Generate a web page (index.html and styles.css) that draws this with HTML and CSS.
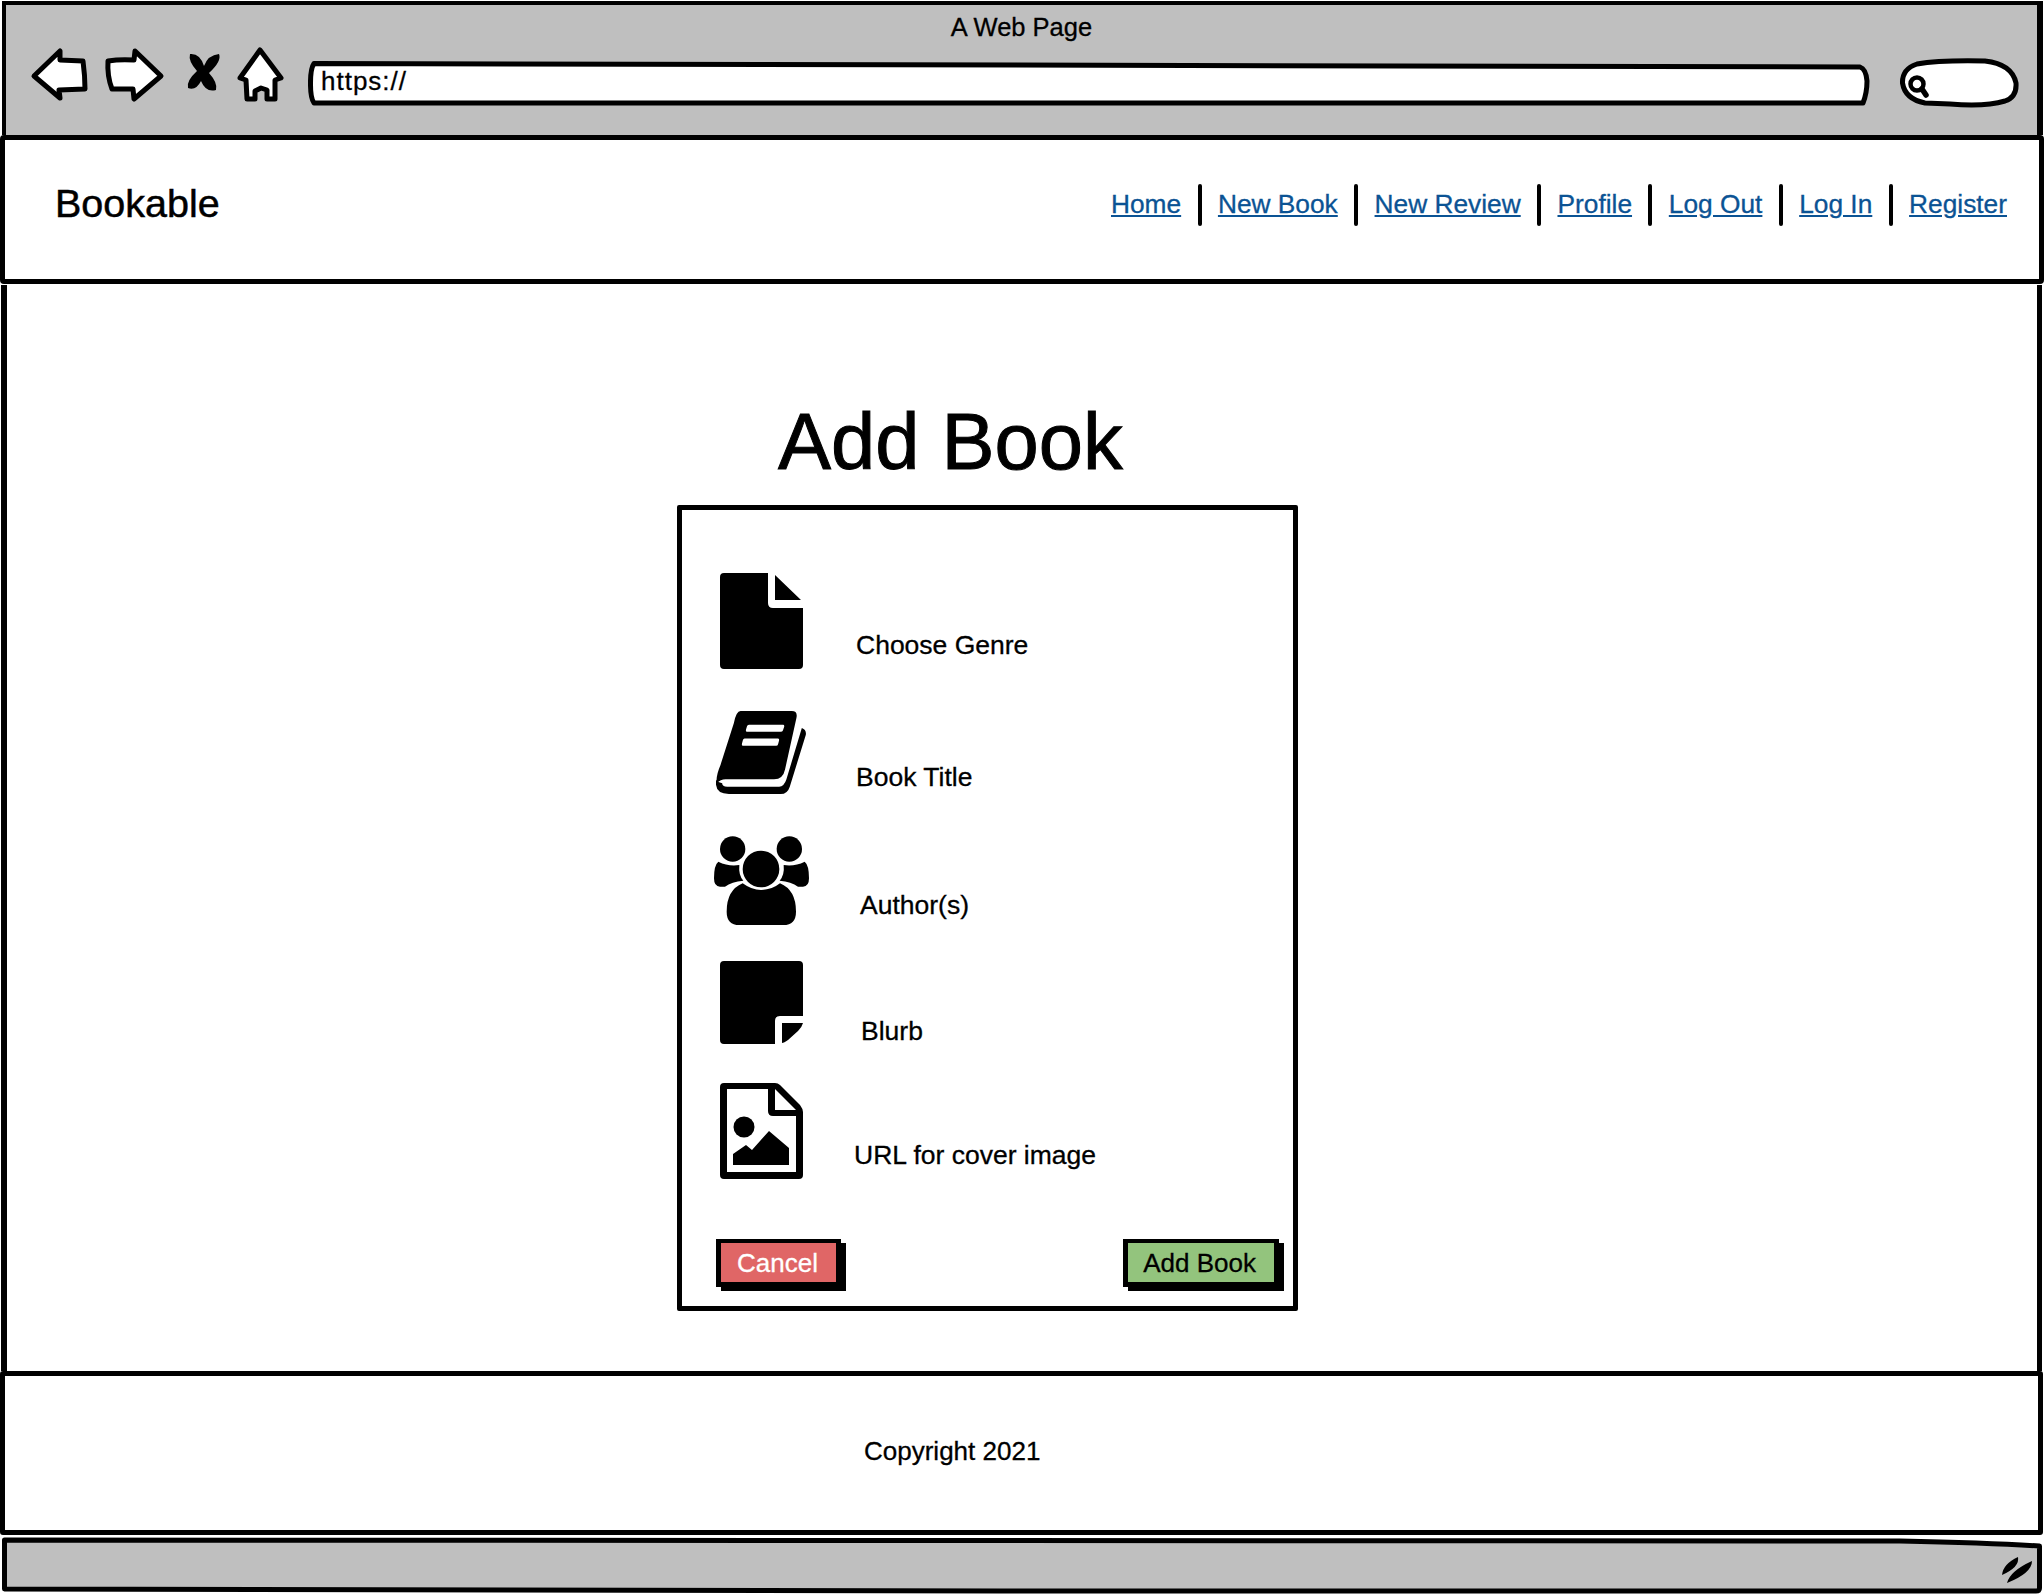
FILE: index.html
```html
<!DOCTYPE html>
<html lang="en">
<head>
<meta charset="utf-8">
<title>Add Book</title>
<link rel="stylesheet" href="styles.css">
</head>
<body>
<header class="chrome">
  <div class="page-title">A Web Page</div>
  <div class="toolbar">
    <svg class="tool tool-back" width="58" height="56" viewBox="30 46 58 56"><path class="tool-line" d="M34 75 L60 50 L60 59 L83 60 Q85 75 85 88 L59 89 L60 97 Z"/></svg>
    <svg class="tool tool-forward" width="61" height="56" viewBox="104 46 61 56"><path class="tool-line" d="M108 60 Q120 58 134 59 L135 50 L161 75 L134 98 L133 88 L112 88 Q107 75 108 60Z"/></svg>
    <svg class="tool tool-stop" width="37" height="56" viewBox="185 46 37 56"><path d="M190 53 Q200 52 204 65 Q208 54 219 53 Q222 60 209 72 Q218 82 216 89 Q206 92 201 80 Q196 90 188 87 Q186 80 197 70 Q188 60 190 53Z"/></svg>
    <svg class="tool tool-home" width="49" height="56" viewBox="236 46 49 56"><path class="tool-line" d="M260 49 L281 77 L275 79 L275 98 L267 98 L267 89 L261 87 L255 90 L255 98 L247 98 L246 79 L240 77 Z"/></svg>
    <div class="url">
      <svg class="url-frame" width="1562" height="46" viewBox="0 0 1562 46"><path class="tool-line" d="M6 2.500 L1552 6 Q1558 8 1559 20 Q1559 32 1555 42 L6 42 C1.300 36 1.300 9 6 2.500Z"/></svg>
      <span class="url-text">https://</span>
    </div>
    <svg class="tool tool-search" width="122" height="62" viewBox="1898 46 122 62">
      <path class="tool-line" d="M1902.500 82 Q1902 68 1917 63 Q1940 59 1985 60 Q2012 63 2016 82 Q2017 96 2005 100 Q1985 106 1950 103 L1925 102 Q1905 98 1902.500 82Z"/>
      <circle class="glass" cx="1917" cy="83" r="6.500"/>
      <path class="handle" d="M1922 88 L1926 94"/>
    </svg>
  </div>
</header>

<nav class="navbar">
  <div class="brand">Bookable</div>
  <div class="links">
    <a href="#">Home</a><span class="sep"></span>
    <a href="#">New Book</a><span class="sep"></span>
    <a href="#">New Review</a><span class="sep"></span>
    <a href="#">Profile</a><span class="sep"></span>
    <a href="#">Log Out</a><span class="sep"></span>
    <a href="#">Log In</a><span class="sep"></span>
    <a href="#">Register</a>
  </div>
</nav>

<main class="main">
  <h1 class="heading">Add Book</h1>
  <form class="card">
    <div class="row row-genre">
      <span class="slot"><svg width="83" height="96" viewBox="0 0 83 96"><path d="M4 0 H48 V30 q0 5 5 5 H83 V92 q0 4 -4 4 H4 q-4 0 -4 -4 V4 q0 -4 4 -4z M55 2 L81 27 H55z"/></svg></span>
      <label class="label">Choose Genre</label>
    </div>
    <div class="row row-title">
      <span class="slot"><svg width="90" height="83" viewBox="172 664 268 248">
        <path d="M245 664 H398 Q416 664 412 684 L378 838 Q372 868 345 868 H200 Q185 868 174 880 Q170 860 185 825 L225 700 Q232 664 245 664 Z"/>
        <path d="M172 870 Q166 912 210 912 H365 Q385 912 392 890 L440 735 Q442 720 428 715 L382 868 Q375 890 360 890 H205 Q190 890 190 880 Q178 878 172 870 Z"/>
        <path class="bar" d="M270 705 H372 Q377 705 375 712 L372 721 Q371 726 366 726 H264 Q260 726 261 720 L264 710 Q265 705 270 705 Z M257 746 H356 Q361 746 360 752 L357 763 Q356 768 351 768 H252 Q248 768 249 762 L252 751 Q253 746 257 746 Z"/>
      </svg></span>
      <label class="label">Book Title</label>
    </div>
    <div class="row row-author">
      <span class="slot"><svg width="95" height="89" viewBox="162 1038 285 267">
        <circle cx="218" cy="1077" r="38"/>
        <circle cx="388" cy="1077" r="38"/>
        <circle cx="303" cy="1137" r="55"/>
        <path d="M248 1180 Q275 1200 303 1200 Q335 1200 360 1180 Q408 1200 408 1265 Q408 1305 370 1305 H238 Q200 1305 200 1265 Q200 1200 248 1180Z"/>
        <path d="M175 1115 Q205 1130 238 1125 Q235 1155 250 1172 Q215 1175 195 1190 H180 Q162 1190 162 1165 Q162 1125 175 1115 Z"/>
        <path d="M434 1115 Q404 1130 371 1125 Q374 1155 359 1172 Q394 1175 414 1190 H429 Q447 1190 447 1165 Q447 1125 434 1115Z"/>
      </svg></span>
      <label class="label">Author(s)</label>
    </div>
    <div class="row row-blurb">
      <span class="slot"><svg width="83" height="83" viewBox="0 0 83 83"><path d="M4 0 H79 q4 0 4 4 V55 H60 q-5 0 -5 5 V83 H4 q-4 0 -4 -4 V4 q0 -4 4 -4z M62 62 H83 Q82 66 78 70 L68 79 Q64 82 62 82 Z"/></svg></span>
      <label class="label">Blurb</label>
    </div>
    <div class="row row-cover">
      <span class="slot"><svg width="83" height="96" viewBox="0 0 83 96">
        <path fill-rule="evenodd" d="M4 0 H55 Q58 0 60 2 L80 22 Q83 26 83 29 V92 q0 4 -4 4 H4 q-4 0 -4 -4 V4 q0 -4 4 -4z M7 6 V89 H76 V33 H53 q-5 0 -5 -5 V6 Z M55 6 V27 H76 Z"/>
        <circle cx="24" cy="44" r="10.500"/>
        <path d="M13 82 V71 L26 62 L32 67 L49 48 L69 65 V82Z"/>
      </svg></span>
      <label class="label">URL for cover image</label>
    </div>
    <div class="actions">
      <button type="button" class="btn btn-cancel">Cancel</button>
      <button type="button" class="btn btn-add">Add Book</button>
    </div>
  </form>
</main>

<footer class="footer">Copyright 2021</footer>

<div class="statusbar">
  <svg width="2044" height="58" viewBox="0 0 2044 58">
    <path class="status-frame" d="M4.500 3 L1900 4 Q1990 6 2039.500 9 L2039.500 51 Q2039.500 54 2036 54 L1000 54 L4.500 52 Z"/>
    <path d="M2002 38 Q2003 27 2018 20 Q2020 30 2002 38Z M2007 46 Q2010 34 2032 24 Q2032 36 2007 46Z"/>
  </svg>
</div>
</body>
</html>
```
FILE: styles.css
```css
* {
  box-sizing: border-box;
}

html,
body {
  margin: 0;
  height: 1594px;
  overflow: hidden;
  background: #fff;
  color: #000;
  font-family: "Liberation Sans", Arial, sans-serif;
  font-size: 26px;
  -webkit-text-stroke: 0.300px currentColor;
}

svg {
  display: block;
  flex: none;
}

path,
circle {
  fill: #000;
}

/* browser chrome */
.chrome {
  height: 134px;
  margin: 1px 1px 0 2px;
  background: #bfbfbf;
  border: solid #000;
  border-width: 4px 6px 0 4px;
}

.page-title {
  height: 42px;
  padding-top: 7px;
  line-height: 30px;
  text-align: center;
  font-size: 25.500px;
}

.toolbar {
  display: flex;
  align-items: flex-start;
  padding: 0 17px 0 24px;
}

.tool-line {
  fill: #fff;
  stroke: #000;
  stroke-width: 5;
  stroke-linejoin: round;
}

.tool-back { margin-right: 16px; }
.tool-forward { margin-right: 20px; }
.tool-stop { margin-right: 14px; }
.tool-home { margin-right: 23px; }

.url {
  position: relative;
  width: 1562px;
  height: 46px;
  margin: 14px 28px 0 0;
  padding-left: 13px;
  line-height: 40px;
  font-size: 26px;
}

.url-frame {
  position: absolute;
  left: 0;
  top: 0;
}

.url-text {
  position: relative;
  letter-spacing: 1px;
}

.glass {
  fill: none;
  stroke: #000;
  stroke-width: 4.500;
}

.handle {
  fill: none;
  stroke: #000;
  stroke-width: 5.500;
  stroke-linecap: round;
}

/* navbar */
.navbar {
  display: flex;
  justify-content: space-between;
  align-items: flex-start;
  height: 149px;
  padding: 45px 32px 0 50px;
  border: 5px solid #000;
  border-radius: 4px;
  background: #fff;
}

.brand {
  font-size: 39.500px;
  line-height: 36px;
  -webkit-text-stroke-width: 0.500px;
}

.links {
  display: flex;
  align-items: flex-start;
  margin-top: -1px;
}

.links a {
  color: #0b5394;
  font-size: 26.300px;
  line-height: 40px;
}

.sep {
  width: 4px;
  height: 42px;
  margin: 0 16.400px;
  background: #000;
  border-radius: 3px;
}

/* main */
.main {
  height: 1086px;
  margin: 1px 2px 0 1px;
  padding-top: 117px;
  border: solid #000;
  border-width: 0 5px 0 6px;
}

.heading {
  margin: 0 0 24px 771px;
  font-size: 79.500px;
  line-height: 79px;
  font-weight: 400;
  -webkit-text-stroke-width: 1px;
}

.card {
  width: 621px;
  margin-left: 670px;
  padding: 63px 0 19px;
  border: 5px solid #000;
  border-radius: 2px;
}

.row {
  display: flex;
  align-items: flex-end;
  padding-left: 31px;
  line-height: 30px;
}

.label {
  font-size: 26.500px;
}

.slot {
  display: flex;
  justify-content: center;
  width: 96px;
}

.row-genre { margin-bottom: 42px; }
.row-genre .label { margin: 0 0 9px 47px; }

.row-title { margin-bottom: 42px; }
.row-title .label { margin: 0 0 2px 47px; }

.row-author { margin-bottom: 36px; }
.row-author .label { margin: 0 0 5px 51px; }

.row-blurb { margin-bottom: 39px; }
.row-blurb .label { margin: 0 0 -2px 52px; }

.row-cover { margin-bottom: 60px; }
.row-cover .label { margin: 0 0 9px 45px; }

.bar {
  fill: #fff;
}

.actions {
  display: flex;
  justify-content: space-between;
  padding: 0 14px 0 34px;
}

.btn {
  height: 48px;
  padding: 0 18px 0 16px;
  border: solid #000;
  border-width: 4px 5px 5px;
  box-shadow: 5px 4px 0 #000;
  font: inherit;
  line-height: 36px;
}

.btn-cancel {
  background: #e06666;
  color: #fff;
}

.btn-add {
  background: #93c47d;
  color: #000;
  padding: 0 18px 0 15px;
}

/* footer */
.footer {
  display: flex;
  align-items: center;
  height: 164px;
  padding: 0 0 4px 859px;
  border: 5px solid #000;
  border-radius: 3px;
  background: #fff;
  margin-right: 1px;
}

/* status bar */
.statusbar {
  margin-top: 2px;
}

.status-frame {
  fill: #bfbfbf;
  stroke: #000;
  stroke-width: 5;
  stroke-linejoin: round;
}
```
